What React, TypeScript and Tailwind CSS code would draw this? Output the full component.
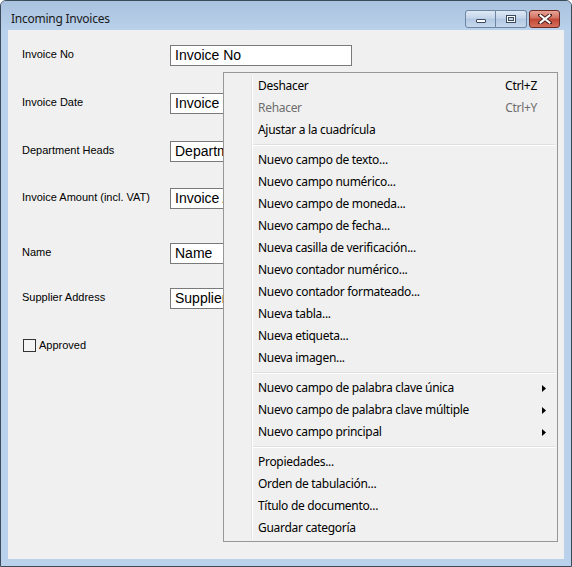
import React from 'react';

type MenuEntry =
  | { kind: 'item'; label: string; shortcut?: string; disabled?: boolean; submenu?: boolean }
  | { kind: 'sep' };

const menuEntries: MenuEntry[] = [
  { kind: 'item', label: 'Deshacer', shortcut: 'Ctrl+Z' },
  { kind: 'item', label: 'Rehacer', shortcut: 'Ctrl+Y', disabled: true },
  { kind: 'item', label: 'Ajustar a la cuadrícula' },
  { kind: 'sep' },
  { kind: 'item', label: 'Nuevo campo de texto...' },
  { kind: 'item', label: 'Nuevo campo numérico...' },
  { kind: 'item', label: 'Nuevo campo de moneda...' },
  { kind: 'item', label: 'Nuevo campo de fecha...' },
  { kind: 'item', label: 'Nueva casilla de verificación...' },
  { kind: 'item', label: 'Nuevo contador numérico...' },
  { kind: 'item', label: 'Nuevo contador formateado...' },
  { kind: 'item', label: 'Nueva tabla...' },
  { kind: 'item', label: 'Nueva etiqueta...' },
  { kind: 'item', label: 'Nueva imagen...' },
  { kind: 'sep' },
  { kind: 'item', label: 'Nuevo campo de palabra clave única', submenu: true },
  { kind: 'item', label: 'Nuevo campo de palabra clave múltiple', submenu: true },
  { kind: 'item', label: 'Nuevo campo principal', submenu: true },
  { kind: 'sep' },
  { kind: 'item', label: 'Propiedades...' },
  { kind: 'item', label: 'Orden de tabulación...' },
  { kind: 'item', label: 'Título de documento...' },
  { kind: 'item', label: 'Guardar categoría' },
];

// label, input placeholder, margin above the row (px)
const fields = [
  { label: 'Invoice No', value: 'Invoice No', mt: 'mt-0' },
  { label: 'Invoice Date', value: 'Invoice Date', mt: 'mt-[27px]' },
  { label: 'Department Heads', value: 'Department Heads', mt: 'mt-[27px]' },
  { label: 'Invoice Amount (incl. VAT)', value: 'Invoice Amount', mt: 'mt-[26px]' },
  { label: 'Name', value: 'Name', mt: 'mt-[34px]' },
  { label: 'Supplier Address', value: 'Supplier Address', mt: 'mt-[24px]' },
];

const TitleButtons = () => (
  <div className="flex items-start gap-[2px] pt-[9px] pr-[11px]">
    <div className="flex">
      {/* minimize */}
      <div className="w-[31px] h-[18px] rounded-l-[3px] border border-[#6d85a3] bg-[linear-gradient(#dde8f4,#c3d5ea_45%,#b2c7e1_50%,#c6d8ec)] flex items-end justify-center pb-[4px]">
        <div className="w-[10px] h-[4px] bg-white border border-[#3b4b5f] rounded-[1px]" />
      </div>
      {/* maximize */}
      <div className="w-[31px] h-[18px] rounded-r-[3px] border border-l-0 border-[#6d85a3] bg-[linear-gradient(#dde8f4,#c3d5ea_45%,#b2c7e1_50%,#c6d8ec)] flex items-center justify-center">
        <div className="w-[10px] h-[8px] border border-[#3b4b5f] bg-white flex items-center justify-center">
          <div className="w-[6px] h-[4px] border border-[#3b4b5f] bg-[#c9d6e6]" />
        </div>
      </div>
    </div>
    {/* close */}
    <div className="w-[31px] h-[18px] rounded-[3px] border border-[#6e2a24] bg-[linear-gradient(#e8a497,#d1705f_45%,#c24634_50%,#d4705d)] flex items-center justify-center">
      <svg width="14" height="10" viewBox="0 0 14 10">
        <path d="M2 1 L12 9 M12 1 L2 9" stroke="#4a2320" strokeWidth="4" strokeLinecap="square" />
        <path d="M2.5 1.5 L11.5 8.5 M11.5 1.5 L2.5 8.5" stroke="#ffffff" strokeWidth="2" strokeLinecap="square" />
      </svg>
    </div>
  </div>
);

const ContextMenu = () => (
  <div className="absolute left-[215px] top-[42px] w-[335px] h-[470px] border border-[#979797] bg-[#f0f0f0] py-[2px] flex font-['Noto_Sans','Liberation_Sans',sans-serif] text-[12px] tracking-[-0.3px] text-black">
    <div className="w-[28px] border-r border-[#e2e3e3]" />
    <div className="w-px bg-white" />
    <div className="flex-1 flex flex-col pr-[2px]">
      {menuEntries.map((e, i) =>
        e.kind === 'sep' ? (
          <div key={i} className="h-[8px] pt-[3px]">
            <div className="h-px bg-[#e0e0e0]" />
            <div className="h-px bg-white" />
          </div>
        ) : (
          <div
            key={i}
            className={`h-[22px] flex items-center pl-[5px] ${e.disabled ? 'text-[#6d6d6d]' : ''}`}
          >
            <span>{e.label}</span>
            {e.shortcut && <span className="ml-auto pr-[18px]">{e.shortcut}</span>}
            {e.submenu && (
              <span className="ml-auto pr-[9px]">
                <svg width="4" height="7" viewBox="0 0 4 7" className="block">
                  <path d="M0 0 L4 3.5 L0 7 Z" fill="#000" />
                </svg>
              </span>
            )}
          </div>
        )
      )}
    </div>
  </div>
);

export default function App() {
  return (
    <div className="w-[572px] h-[567px] bg-[#b9d1ea] border border-[#3c4a5a] rounded-t-[6px] flex flex-col overflow-hidden">
      {/* title bar */}
      <div className="h-[29px] shrink-0 flex items-start bg-[linear-gradient(#a9c2df,#b9d1ea)]">
        <div className="flex-1 pl-[10px] pt-[10px] text-[12px] leading-[16px] tracking-[-0.25px] text-[#1a1a1a] font-['Noto_Sans','Liberation_Sans',sans-serif]">
          Incoming Invoices
        </div>
        <TitleButtons />
      </div>
      {/* client area */}
      <div className="flex-1 px-[7px] pb-[7px]">
        <div className="relative h-full bg-[#f0f0f0] pt-[15px] pl-[14px] font-['Liberation_Sans',sans-serif]">
          {fields.map(f => (
            <div key={f.label} className={`flex items-start ${f.mt}`}>
              <div className="w-[148px] pt-[3px] text-[11px] leading-[13px] text-black">{f.label}</div>
              <div className="w-[182px] h-[21px] bg-white border border-[#7a7a7a] pl-[4px] text-[14px] leading-[19px] text-black overflow-hidden whitespace-nowrap">
                {f.value}
              </div>
            </div>
          ))}
          <div className="mt-[30px] ml-[1px] flex items-center gap-[3px]">
            <div className="w-[13px] h-[13px] border border-[#333333] bg-[#f4f4f4]" />
            <span className="text-[11px] leading-[13px] text-black">Approved</span>
          </div>
          <ContextMenu />
        </div>
      </div>
    </div>
  );
}
